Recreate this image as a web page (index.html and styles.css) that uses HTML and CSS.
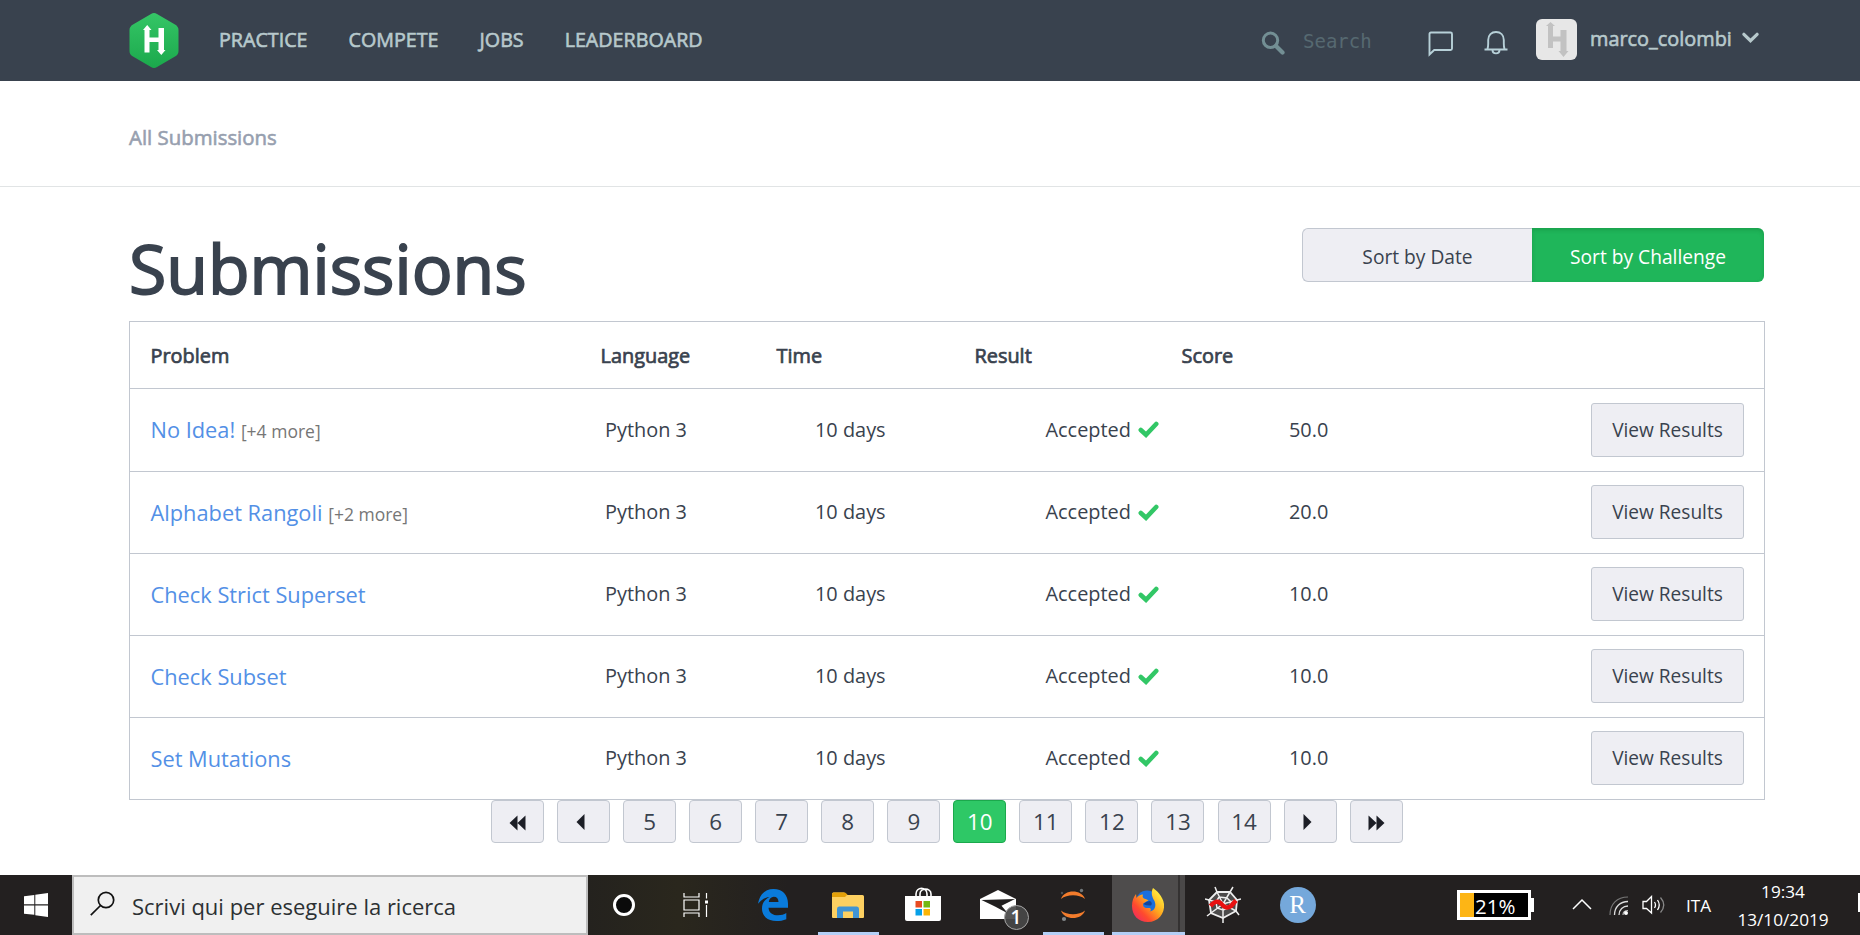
FILE: index.html
```
<!DOCTYPE html>
<html lang="en">
<head>
<meta charset="utf-8">
<title>Submissions</title>
<link rel="stylesheet" href="styles.css">
</head>
<body>
<svg class="defs" width="0" height="0" aria-hidden="true">
  <symbol id="check" viewBox="0 0 21 17"><path d="M2.8 9 L8 13.8 L18.2 3" fill="none" stroke="#32c766" stroke-width="4.6" stroke-linejoin="miter" stroke-linecap="round"/></symbol>
</svg>
<header class="topbar">
  <svg class="logo" viewBox="0 0 50 55">
    <defs><linearGradient id="lg" x1="0" y1="0" x2="0" y2="1"><stop offset="0" stop-color="#35c566"/><stop offset="1" stop-color="#1ba94c"/></linearGradient></defs>
    <path d="M22 1 Q25 -.8 28 1 L46 11.5 Q49.5 13.5 49.5 17 V38 Q49.5 41.500 46 43.500 L28 54 Q25 55.800 22 54 L4 43.500 Q.5 41.500 .5 38 V17 Q.5 13.500 4 11.500 Z" fill="url(#lg)"/>
    <path d="M15.500 17 H20.500 V24.500 H29.500 V15 H35 V37 H36.500 L32.300 42 L28 37 H29.500 V29 H20.500 V39.500 H15.500 V17 H14 L18.200 12 L22.500 17 Z" fill="#fff"/>
  </svg>
  <nav class="nav"><a>PRACTICE</a><a>COMPETE</a><a>JOBS</a><a>LEADERBOARD</a></nav>
  <div class="tools">
    <svg class="i-search" viewBox="0 0 24 24"><circle cx="9.500" cy="9.300" r="7.200" fill="none" stroke="#738f94" stroke-width="3"/><path d="M15 15 L21.500 21.500" stroke="#738f94" stroke-width="4.200" stroke-linecap="round"/></svg>
    <span class="placeholder">Search</span>
    <svg class="i-chat" viewBox="0 0 26 26"><path d="M1.500 23.500 V3 Q1.500 1.500 3 1.500 H22.500 Q24 1.500 24 3 V17.500 Q24 19 22.500 19 H6.200 Z" fill="none" stroke="#b7d0d8" stroke-width="1.900"/></svg>
    <svg class="i-bell" viewBox="0 0 24 24"><path d="M0.500 18.500 H23.500 M3.500 18 Q4.200 16 4.200 12.500 V9 C4.200 4 7.500 1 12 1 S19.800 4 19.800 9 V12.500 Q19.800 16 20.500 18 M8.500 19 C8.500 23.500 15.500 23.500 15.500 19" fill="none" stroke="#b7d0d8" stroke-width="1.900"/></svg>
    <svg class="avatar" viewBox="0 0 41 41"><rect width="41" height="41" rx="6" fill="#e7e7e7"/><path d="M12 7 H17 V17.500 H24.500 V11 H30.500 V32 H32.500 L27.500 38 L22.500 32 H24.500 V22.500 H17 V29 H12 V7 H10 L14.500 3 L19 7 Z" fill="#c2c2c2"/></svg>
    <span class="user">marco_colombi</span>
    <svg class="i-down" viewBox="0 0 16 10"><path d="M1.800 2 L8 8 L14.200 2" fill="none" stroke="#b7c9cc" stroke-width="3" stroke-linecap="round"/></svg>
  </div>
</header>
<div class="crumbs"><span>All Submissions</span></div>
<main class="content">
  <div class="titlebar">
    <h1>Submissions</h1>
    <div class="sort"><button class="sort-date">Sort by Date</button><button class="sort-challenge">Sort by Challenge</button></div>
  </div>
  <section class="table">
    <div class="thead"><span>Problem</span><span>Language</span><span>Time</span><span>Result</span><span>Score</span></div>
    <div class="row"><span class="problem"><a>No Idea!</a> <small>[+4 more]</small></span><span>Python 3</span><span>10 days</span><span class="result">Accepted<svg><use href="#check"/></svg></span><span>50.0</span><button>View Results</button></div>
    <div class="row"><span class="problem"><a>Alphabet Rangoli</a> <small>[+2 more]</small></span><span>Python 3</span><span>10 days</span><span class="result">Accepted<svg><use href="#check"/></svg></span><span>20.0</span><button>View Results</button></div>
    <div class="row"><span class="problem"><a>Check Strict Superset</a></span><span>Python 3</span><span>10 days</span><span class="result">Accepted<svg><use href="#check"/></svg></span><span>10.0</span><button>View Results</button></div>
    <div class="row"><span class="problem"><a>Check Subset</a></span><span>Python 3</span><span>10 days</span><span class="result">Accepted<svg><use href="#check"/></svg></span><span>10.0</span><button>View Results</button></div>
    <div class="row"><span class="problem"><a>Set Mutations</a></span><span>Python 3</span><span>10 days</span><span class="result">Accepted<svg><use href="#check"/></svg></span><span>10.0</span><button>View Results</button></div>
  </section>
  <div class="pages">
    <a><svg width="18" height="16"><path d="M8.500 .5 V15.500 L.5 8 Z M16.500 .5 V15.500 L8.500 8 Z"/></svg></a>
    <a><svg class="single-left" width="9" height="16"><path d="M8.500 0 V16 L.5 8 Z"/></svg></a>
    <a>5</a><a>6</a><a>7</a><a>8</a><a>9</a><a class="current">10</a><a>11</a><a>12</a><a>13</a><a>14</a>
    <a><svg class="single-right" width="9" height="16"><path d="M.5 0 V16 L8.500 8 Z"/></svg></a>
    <a><svg width="18" height="16"><path d="M1.500 .5 V15.500 L9.500 8 Z M9.500 .5 V15.500 L17.500 8 Z"/></svg></a>
  </div>
</main>
<footer class="taskbar">
  <div class="start"><svg width="24" height="24"><path d="M0 3.300 L10.300 2 V11.300 H0 Z M11.300 1.800 L24 0 V11.300 H11.300 Z M0 12.400 H10.300 V21.800 L0 20.700 Z M11.300 12.400 H24 V24 L11.300 22.200 Z" fill="#fff"/></svg></div>
  <div class="search">
    <svg width="25" height="26"><circle cx="16" cy="9" r="7.700" fill="none" stroke="#111" stroke-width="1.700"/><path d="M10.500 14.500 L.8 24.200" stroke="#111" stroke-width="1.700"/></svg>
    <span>Scrivi qui per eseguire la ricerca</span>
  </div>
  <div class="apps">
    <div class="app"><svg width="26" height="26"><circle cx="13" cy="13" r="9.500" fill="#0b0b0b" stroke="#fff" stroke-width="3"/></svg></div>
    <div class="app"><svg class="taskview" width="26" height="24"><path d="M1 0 V4 H16 V0 M1 7 H16 V17 H1 Z M1 24 V20 H16 V24 M23.500 0 V5.500 M23.500 12 V24" fill="none" stroke="#fff" stroke-width="1.200"/><rect x="22" y="7.500" width="3" height="3" fill="#fff"/></svg></div>
    <div class="app"><svg width="30" height="32"><path d="M0 14.800 C1.500 5 7.500 0 15.500 0 C24.500 0 30 6 30 14.500 V18.700 H10.500 C10.800 24 15 26.300 20 26.300 C23.500 26.300 26 25.300 28.300 24 V30.200 C25 31.600 22 32 18.500 32 C9 32 4 26.500 4 19.500 C4 14.500 6.500 10.500 11.500 8 C6.500 8.500 2.500 11.500 0 14.800 Z M10.800 13 H20.500 C20.500 9.500 18.500 7.700 15.800 7.700 C13 7.700 11.200 9.800 10.800 13 Z" fill="#0a7bdb" fill-rule="evenodd"/></svg></div>
    <div class="app open"><svg width="32" height="27"><path d="M0 2 Q0 .5 1.500 .5 H12 L15 3 H30.500 Q32 3 32 4.500 V25 Q32 26 31 26 H1 Q0 26 0 25 Z" fill="#fdd061"/><path d="M0 2 Q0 .5 1.500 .5 H13 L15.500 2.500 L13 5 H0 Z" fill="#e3a009"/><path d="M5 26 V17 Q5 14.500 7 14.500 H25 Q27 14.500 27 17 V26 H21 V19.500 H11 V26 Z" fill="#4094d4"/></svg></div>
    <div class="app"><svg width="36" height="36"><path d="M11 10 V7 C11 -.5 22 -.5 22 7 V10 M15 10 V7 C15 .5 26 .5 26 7 V10" fill="none" stroke="#fff" stroke-width="1.600"/><path d="M0 9 H36 V32 Q36 34 34 34 H2 Q0 34 0 32 Z" fill="#fff"/><path d="M10.500 14 H17 V20.500 H10.500 Z" fill="#e84b22"/><path d="M18.500 14 H25 V20.500 H18.500 Z" fill="#76b813"/><path d="M10.500 22 H17 V28.500 H10.500 Z" fill="#06a0e8"/><path d="M18.500 22 H25 V28.500 H18.500 Z" fill="#fbb507"/></svg></div>
    <div class="app"><div class="mail"><svg width="36" height="30"><path d="M0 9 L18 0 L36 9 V29 H0 Z" fill="#fff"/><path d="M1.500 10 L35 9 L21.500 15.800 L28 23.500 L15 16.500 Z" fill="#211f1f"/></svg><span class="badge">1</span></div></div>
    <div class="app open"><svg width="26" height="34"><path d="M1 11 C4 1 22 1 25 11 C19 6 7 6 1 11 Z M1 22.500 C4 32.500 22 32.500 25 22.500 C19 27.500 7 27.500 1 22.500 Z" fill="#f37c2c"/><circle cx="21.500" cy="2.500" r="1.700" fill="#71777a"/><circle cx="2" cy="5" r="1.200" fill="#4d5052"/><circle cx="4" cy="31" r="2.100" fill="#84888b"/></svg></div>
    <div class="app open active"><svg width="34" height="36">
      <defs><linearGradient id="fx" x1="1" y1="0" x2="0" y2="1"><stop offset=".15" stop-color="#ffea3c"/><stop offset=".45" stop-color="#ffa51e"/><stop offset=".7" stop-color="#ff4a2e"/><stop offset="1" stop-color="#e91e74"/></linearGradient></defs>
      <circle cx="16" cy="14.500" r="11" fill="#1b6fdc"/>
      <path d="M22 1 C25 3 32 9 33 17 C34 27 27 35 17 35 C7 35 1 28 1 19 C1 14 2.500 10 5 7 L5.500 11 Q8 7.500 12 7.500 C11 10 12 11.500 14.500 12 L17.500 13.200 L13 16 C11 18 12.500 21.500 17 21 C20 20.500 21 23 18.500 24.500 C24 24 25.500 18.500 23.500 14 C20.500 9 20 5 22 1 Z" fill="url(#fx)"/><path d="M12 17 Q16 19 20 18.500 Q22 16 19 14 Q16 14 12 17 Z" fill="#12449b"/></svg></div>
    <div class="app"><svg width="36" height="38" fill="none"><path d="M12 6 L25 6 L32 14 L31 25 L18 32 L6 27 L4 14 Z" fill="#4c4b4b" stroke="#eee" stroke-width="1.800"/><path d="M12 6 L10 1 M25 6 L28 1 M32 14 L36 13 M31 25 L34 29 M18 32 V37 M6 27 L2 30 M4 14 L0 13 M12 6 L18 18 L25 6 M32 14 L18 18 L31 25 M18 18 V32 M6 27 L18 18 L4 14 M14 11 L22 12 L26 16 L24 22 L18 24 L12 22 L11 16 Z" stroke="#eee" stroke-width="1.500"/><path d="M5.500 20 Q11 13 16 17.500 Q21 24 26 20 L31 14.500" stroke="#e91111" stroke-width="4.500"/></svg></div>
    <div class="app"><span class="r-app">R</span></div>
  </div>
  <div class="tray">
    <div class="battery"><span>21%</span></div>
    <svg class="t-up" width="20" height="12"><path d="M1 11 L10 2 L19 11" fill="none" stroke="#fff" stroke-width="1.500"/></svg>
    <svg class="t-wifi" width="20" height="20"><g fill="none"><path d="M1 19 C1 8 8 1 19 1" stroke="#777" stroke-width="1.200"/><path d="M5.500 19 C5.500 11 11 5.500 19 5.500 M10 19 C10 13.500 14 10 19 10" stroke="#ddd" stroke-width="1.300"/><path d="M14 19 Q14 14.500 19 14.500" stroke="#bbb" stroke-width="1.200"/></g><circle cx="17" cy="17" r="2" fill="#fff"/></svg>
    <svg class="t-vol" width="24" height="20"><g fill="none"><path d="M1 6.500 H4.500 L9.500 1.500 V18 L4.500 13.500 H1 Z M12.500 7 Q14.500 10 12.500 13 M15.500 5 Q19 10 15.500 15" stroke="#fff" stroke-width="1.300"/><path d="M18.500 2.500 Q25 10 18.500 17.500" stroke="#888" stroke-width="1.300"/></g></svg>
    <span class="lang">ITA</span>
    <div class="clock"><span>19:34</span><span>13/10/2019</span></div>
    <span class="notify"></span>
  </div>
</footer>
</body>
</html>
```
FILE: styles.css
```
* { box-sizing: border-box; }
body {
  margin: 0;
  width: 1860px;
  height: 935px;
  overflow: hidden;
  display: flex;
  flex-direction: column;
  background: #fff;
  color: #39424e;
  font-family: "Open Sans", "Noto Sans", sans-serif;
  font-size: 19.900px;
}
svg { display: block; flex: none; }
.defs { position: absolute; }
button { font-family: inherit; color: inherit; padding: 0; margin: 0; }

.topbar {
  height: 81px;
  flex: none;
  display: flex;
  align-items: flex-start;
  padding-left: 129px;
  background: #39424e;
  color: #b7c9cc;
}
.logo { width: 50px; height: 55px; margin-top: 13px; }
.nav { display: flex; gap: 41px; margin-left: 40px; line-height: 79px; font-size: 19.700px; -webkit-text-stroke: .6px; }
.tools { display: flex; margin-left: auto; width: 599px; }
.i-search { width: 24px; height: 24px; margin-top: 31px; }
.placeholder { width: 126px; padding-left: 18px; line-height: 82px; font-family: "DejaVu Sans Mono", monospace; font-size: 19px; font-weight: 200; color: #566971; }
.i-chat { width: 26px; height: 26px; margin: 31px 0 0 17px; }
.i-bell { width: 24px; height: 24px; margin: 31px 0 0 30px; }
.avatar { width: 41px; height: 41px; margin: 19px 0 0 28px; }
.user { line-height: 78px; margin-left: 13px; width: 153px; -webkit-text-stroke: .6px; }
.i-down { width: 17px; height: 11px; margin: 32px 0 0 -1px; }

.crumbs {
  height: 106px;
  flex: none;
  padding-left: 129px;
  border-bottom: 1px solid #e1e4e5;
  line-height: 112px;
  font-size: 20.400px;
  color: #979faf;
  -webkit-text-stroke: .6px;
}

.content { flex: 1; padding: 0 95px 0 129px; }
.titlebar { height: 134px; display: flex; justify-content: space-between; padding-right: 1px; }
h1 { margin: 0; margin-left: 0; font-size: 68px; line-height: 161px; font-weight: 400; -webkit-text-stroke: 1.800px; height: 134px; }
.sort { display: flex; margin-top: 41px; height: 54px; }
.sort button { font-size: 19.200px; height: 54px; padding-top: 2px; }
.sort-date { width: 230px; border: 1px solid #c2c7d0; border-right: 0; border-radius: 6px 0 0 6px; background: #eeeef3; }
.sort .sort-challenge { width: 232px; border: 0; border-radius: 0 6px 6px 0; background: #1fb65a; color: #fff; box-shadow: inset 0 2px 4px rgba(0, 70, 20, .2); }

.table { border: 1px solid #c2c7d0; height: 479px; }
.thead { height: 66px; padding-left: 20.500px; display: grid; grid-template-columns: 450px 176px 198px 207px 1fr; line-height: 68px; -webkit-text-stroke: .7px; }
.row { height: 82px; padding: 0 20px 0 20.500px; border-top: 1px solid #c2c7d0; display: grid; grid-template-columns: 454.500px 210px 230.500px 243.500px 1fr 153px; line-height: 80px; }
.thead + .row { height: 83px; line-height: 81px; }
.problem { font-size: 21.800px; line-height: 82px; }
.problem a { color: #5390e6; }
.problem small { font-size: 17.500px; color: #767676; }
.result { display: flex; align-items: flex-start; }
.result svg { width: 21px; height: 17px; margin: 32px 0 0 7px; }
.row button { height: 54px; margin-top: 13px; border: 1px solid #c2c7d0; border-radius: 3px; background: #eeeef3; font-size: 19.100px; }
.thead + .row button { margin-top: 14px; }

.pages { display: flex; gap: 13.050px; padding-left: 362px; }
.pages a { width: 53px; height: 43px; display: flex; align-items: center; justify-content: center; border: 1px solid #c2c7d0; border-radius: 4px; background: #eeeef3; font-size: 22.400px; line-height: 41px; }
.pages svg { fill: #1c1e26; margin-top: 3px; }
.pages .single-left { margin: 0 7px 0 0; }
.pages .single-right { margin: 0 6px 0 0; }
.pages .current { background: #2ec866; border-color: #1ba94c; color: #fff; }

.taskbar { height: 60px; flex: none; display: flex; background: #232020; color: #fff; }
.start { width: 72px; display: flex; align-items: center; justify-content: center; }
.search { width: 516px; display: flex; align-items: center; background: #f0f0f0; border: 2px solid #bdbdbd; padding-left: 16px; color: #2c3033; font-size: 22px; }
.search svg { margin-top: -3px; }
.search span { margin-left: 17px; padding-top: 1px; }
.apps { display: flex; background: linear-gradient(90deg, #24221e, #2a271d 90px, #232020 200px); }
.app { width: 75px; height: 60px; padding-right: 2px; display: flex; align-items: center; justify-content: center; border: solid transparent; border-width: 0 7px; }
.app:first-child { width: 73px; }
.taskview { margin-right: 3px; }
.open { background: linear-gradient(#b3cff6, #b3cff6) 50% 100% / 61px 3px no-repeat padding-box; }
.active { width: 73px; margin: 0 1px; border: 0; background: linear-gradient(#b3cff6, #b3cff6) 0 100% / 100% 3px no-repeat, linear-gradient(90deg, #4e4c4c 66px, #343232 66px, #343232 68px, #4a4848 68px); }
.mail { position: relative; }
.badge { position: absolute; left: 24px; top: 15px; width: 25px; height: 25px; border: 1px solid #a5a5a5; border-radius: 50%; background: rgba(72, 72, 72, .92); font-size: 19px; font-weight: 600; line-height: 23px; text-align: center; }
.r-app { width: 36px; height: 36px; flex: none; border-radius: 50%; background: #75a8db; font-family: "Liberation Serif", serif; font-size: 25px; line-height: 35px; text-align: center; }

.tray { flex: 1; display: flex; align-items: flex-start; font-size: 17.200px; }
.battery { position: relative; width: 74px; height: 30px; margin: 15px 0 0 121px; border: 3px solid #fff; background: linear-gradient(90deg, #fdb515 14px, #000 14px); padding-left: 15px; font-size: 20.500px; line-height: 27px; }
.battery::after { content: ""; position: absolute; left: 71px; top: 5px; width: 3px; height: 14px; background: #fff; }
.t-up { margin: 23px 0 0 41px; }
.t-wifi { margin: 21px 0 0 17px; }
.t-vol { margin: 20px 0 0 13px; }
.lang { margin-left: 20px; width: 56px; line-height: 61px; }
.clock { width: 90px; margin-left: -4px; display: flex; flex-direction: column; align-items: center; padding-top: 3px; line-height: 28px; white-space: nowrap; }
.notify { width: 2px; height: 19px; margin: 18px 0 0 auto; background: #fff; }
```
